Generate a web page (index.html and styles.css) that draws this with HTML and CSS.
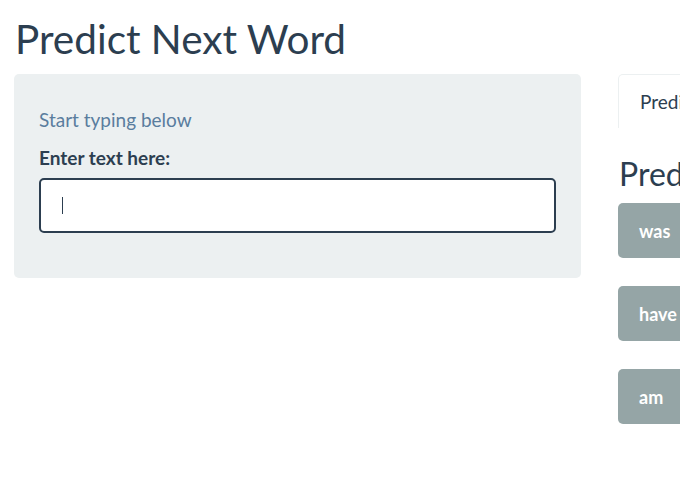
FILE: index.html
```html
<!DOCTYPE html>
<html>
<head>
<meta charset="utf-8">
<link rel="stylesheet" href="styles.css">
</head>
<body>
<div class="page">
  <h2 class="title">Predict Next Word</h2>
  <div class="row">
    <div class="sidebar">
      <div class="well">
        <p class="help">Start typing below</p>
        <label class="label" for="txt">Enter text here:</label>
        <div class="input"><span class="caret"></span></div>
      </div>
    </div>
    <div class="main">
      <ul class="tabs">
        <li class="tab active">Prediction</li>
      </ul>
      <h3 class="subtitle">Predicted words</h3>
      <div class="buttons">
        <button class="btn">was</button>
        <button class="btn">have</button>
        <button class="btn">am</button>
      </div>
    </div>
  </div>
</div>
</body>
</html>
```
FILE: styles.css
```css
html, body {
  margin: 0;
  padding: 0;
  background: #ffffff;
  overflow: hidden;
}
body {
  font-family: Lato, "Open Sans", sans-serif;
  color: #2c3e50;
  font-size: 19px;
  width: 680px;
  height: 500px;
}
.page {
  padding: 0 15px;
}
.title {
  font-size: 40.5px;
  font-weight: 400;
  line-height: 44px;
  margin: 17px 0 13px 0;
  color: #2c3e50;
}
.row {
  display: flex;
  gap: 37px;
  margin-left: -1px;
}
.sidebar {
  flex: 0 0 567px;
}
.well {
  background: #ecf0f1;
  border-radius: 5px;
  padding: 33px 25px 45px 25px;
}
.help {
  margin: 0 0 13px 0;
  color: #5a7d9e;
  font-size: 19px;
  line-height: 25px;
}
.label {
  display: block;
  font-weight: 700;
  font-size: 19px;
  line-height: 25px;
  margin-bottom: 8px;
}
.input {
  height: 55px;
  box-sizing: border-box;
  border: 2px solid #2c3e50;
  border-radius: 5px;
  background: #ffffff;
  display: flex;
  align-items: center;
  padding-left: 21px;
}
.caret {
  width: 1px;
  height: 17px;
  background: #2c3e50;
}
.main {
  flex: 0 0 auto;
  width: 400px;
}
.tabs {
  list-style: none;
  margin: 0;
  padding: 0;
  display: flex;
}
.tab {
  border: 1px solid #ecf0f1;
  border-bottom: none;
  border-radius: 5px 5px 0 0;
  padding: 14px 21px;
  line-height: 25px;
  font-size: 19px;
  color: #2c3e50;
  height: 54px;
  box-sizing: border-box;
}
.subtitle {
  font-size: 32px;
  font-weight: 400;
  line-height: 35px;
  margin: 28px 0 12px 1px;
}
.buttons {
  display: flex;
  flex-direction: column;
  align-items: flex-start;
  gap: 28px;
}
.btn {
  font-family: Lato, "Open Sans", sans-serif;
  background: #95a5a6;
  color: #ffffff;
  font-weight: 700;
  font-size: 18px;
  border: none;
  border-radius: 5px;
  height: 55px;
  padding: 0 21px;
}
```
